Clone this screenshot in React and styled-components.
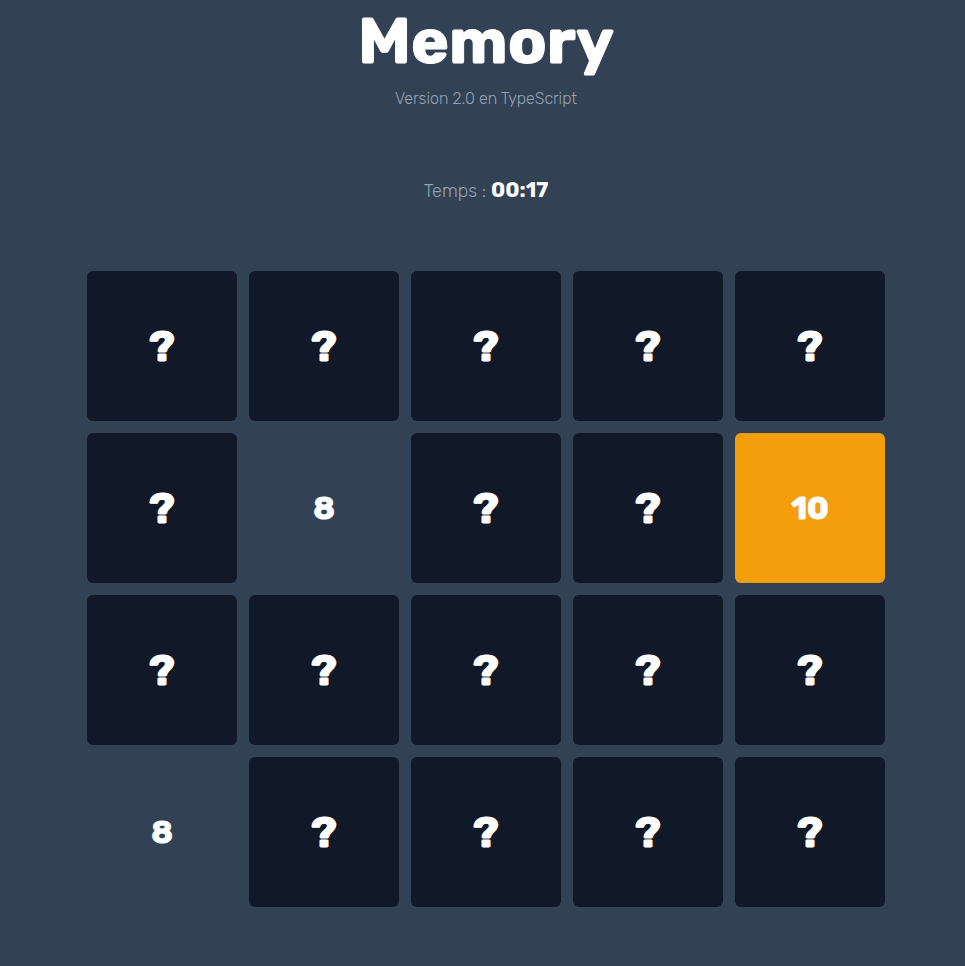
import React from "react";
import styled, { createGlobalStyle } from "styled-components";

const GlobalStyle = createGlobalStyle`
  * { box-sizing: border-box; }
  body {
    margin: 0;
    background: #334155;
    color: #ffffff;
    font-family: Rubik, Inter, Roboto, sans-serif;
  }
`;

const Page = styled.main`
  display: flex;
  flex-direction: column;
  align-items: center;
  min-height: 100vh;
  padding: 0 0 48px 7px;
`;

const Title = styled.h1`
  margin: 0 0 2px;
  font-size: 64px;
  line-height: 82px;
  font-weight: 700;
  -webkit-text-stroke: 1px currentColor;
`;

const Subtitle = styled.p`
  margin: 0;
  font-family: Rubik, Roboto, sans-serif;
  font-size: 16px;
  line-height: 30px;
  font-weight: 300;
  color: #94a3b8;
`;

const Timer = styled.p`
  display: flex;
  align-items: baseline;
  gap: 5px;
  margin: 60px 0 64px;
  font-family: Rubik, Roboto, sans-serif;
  font-size: 18px;
  line-height: 31px;
  font-weight: 300;
  color: #94a3b8;
`;

const TimeValue = styled.strong`
  font-family: Rubik, Inter, sans-serif;
  font-size: 21px;
  font-weight: 700;
  color: #ffffff;
`;

const Board = styled.section`
  display: grid;
  grid-template-columns: repeat(5, 150px);
  grid-auto-rows: 150px;
  gap: 12px;
`;

const backgrounds = {
  hidden: "#111827",
  open: "#f59e0b",
  matched: "transparent",
};

const Card = styled.button`
  display: flex;
  align-items: center;
  justify-content: center;
  padding: 0;
  border: 0;
  border-radius: 6px;
  background: ${({ $state }) => backgrounds[$state]};
  color: #ffffff;
  font-family: inherit;
  font-size: ${({ $state }) => ($state === "hidden" ? "44px" : "32px")};
  font-weight: 700;
  line-height: 1;
  -webkit-text-stroke: 1px currentColor;
  cursor: pointer;
`;

const cards = Array.from({ length: 20 }, (_, index) => {
  if (index === 6 || index === 15) return { value: "8", state: "matched" };
  if (index === 9) return { value: "10", state: "open" };
  return { value: "?", state: "hidden" };
});

export default function App() {
  return (
    <>
      <GlobalStyle />
      <Page>
        <Title>Memory</Title>
        <Subtitle>Version 2.0 en TypeScript</Subtitle>
        <Timer>
          Temps : <TimeValue>00:17</TimeValue>
        </Timer>
        <Board>
          {cards.map((card, index) => (
            <Card key={index} type="button" $state={card.state}>
              {card.value}
            </Card>
          ))}
        </Board>
      </Page>
    </>
  );
}
